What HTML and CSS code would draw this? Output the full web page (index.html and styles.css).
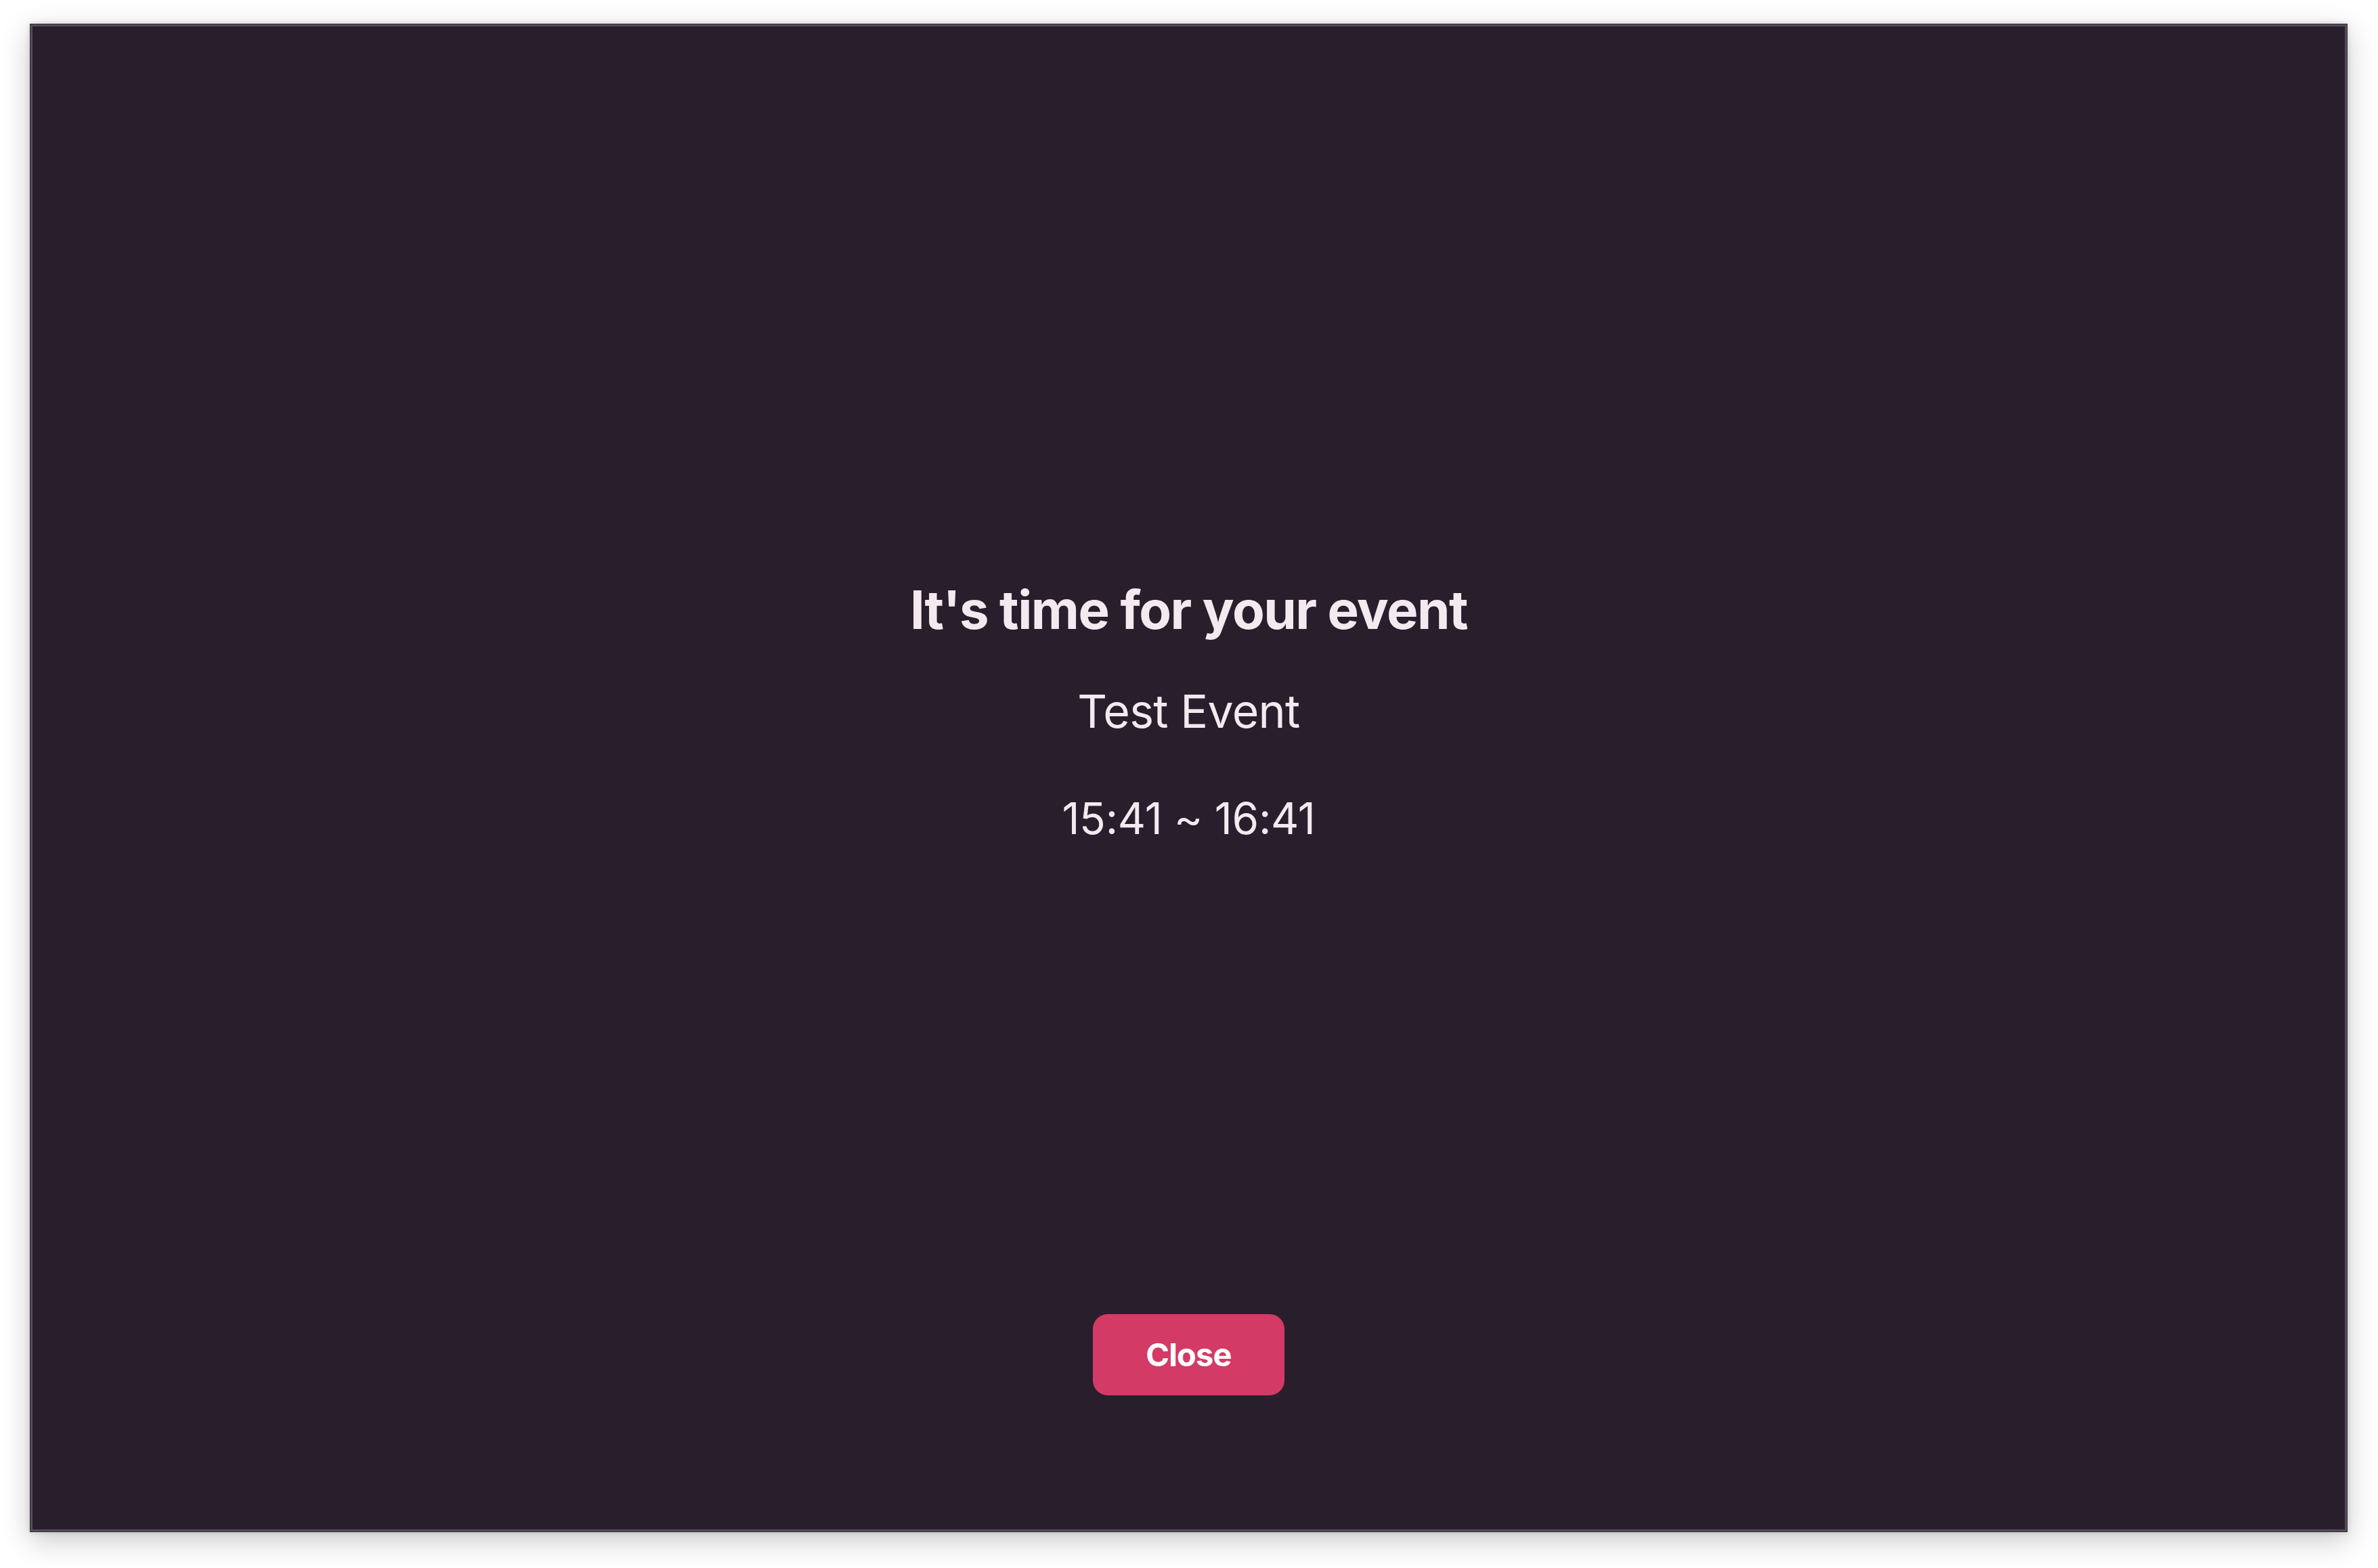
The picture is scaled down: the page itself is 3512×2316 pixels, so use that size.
FILE: index.html
```html
<!DOCTYPE html>
<html lang="en">
<head>
<meta charset="utf-8">
<title>Event reminder</title>
<link rel="stylesheet" href="styles.css">
</head>
<body>
<div class="window">
  <div class="content">
    <h1 class="title">It's time for your event</h1>
    <p class="event-name">Test Event</p>
    <p class="event-time">15:41 ~ 16:41</p>
    <button class="close-btn" type="button">Close</button>
  </div>
</div>
</body>
</html>
```

FILE: styles.css
```css
html, body {
  margin: 0;
  padding: 0;
  background: #ffffff;
}
body {
  width: 3512px;
  height: 2316px;
  overflow: hidden;
  font-family: Inter, "Noto Sans", "Liberation Sans", sans-serif;
}
.window {
  box-sizing: border-box;
  margin: 35px 0 0 44px;
  width: 3423px;
  height: 2228px;
  background: #291e2c;
  border: 1px solid #2e2a30;
  box-shadow: inset 0 0 0 3px #564b5a, 0 12px 40px rgba(0, 0, 0, 0.22), 0 0 8px rgba(0, 0, 0, 0.15);
}
.content {
  display: flex;
  flex-direction: column;
  align-items: center;
  padding-top: 818px;
  color: #f5e9f0;
  line-height: 1.2;
}
.title {
  margin: 0;
  font-size: 78px;
  font-weight: 700;
  letter-spacing: -1.5px;
}
.event-name {
  margin: 62px 0 0;
  font-size: 68px;
  font-weight: 400;
  letter-spacing: -0.7px;
}
.event-time {
  margin: 80px 0 0;
  font-size: 64px;
  font-weight: 400;
  letter-spacing: -0.3px;
}
.close-btn {
  margin-top: 693px;
  width: 283px;
  height: 120px;
  border: none;
  border-radius: 22px;
  background: #d33a65;
  color: #ffffff;
  font-family: Inter, "Noto Sans", "Liberation Sans", sans-serif;
  font-size: 47px;
  font-weight: 700;
  letter-spacing: -0.8px;
  padding: 0;
}
```
